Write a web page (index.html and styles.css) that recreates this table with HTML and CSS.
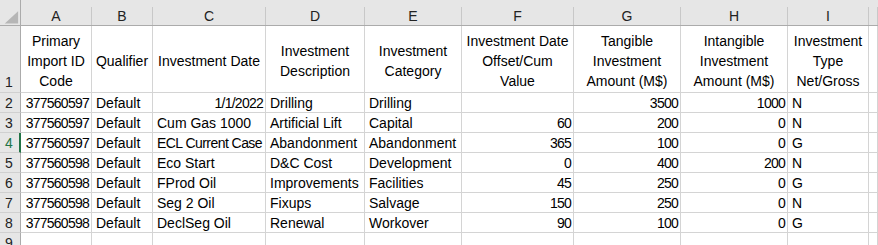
FILE: index.html
```html
<!DOCTYPE html>
<html>
<head>
<meta charset="utf-8">
<link rel="stylesheet" href="styles.css">
</head>
<body>
<div class="sheet">
  <div class="ch corner"><div class="lbl"><svg width="21" height="18" viewBox="0 0 21 18"><polygon points="19,4 19,17 5,17" fill="#b6b6b6"/></svg></div></div>
  <div class="ch"><div class="lbl">A</div></div>
  <div class="ch"><div class="lbl">B</div></div>
  <div class="ch"><div class="lbl">C</div></div>
  <div class="ch"><div class="lbl">D</div></div>
  <div class="ch"><div class="lbl">E</div></div>
  <div class="ch"><div class="lbl">F</div></div>
  <div class="ch"><div class="lbl">G</div></div>
  <div class="ch"><div class="lbl">H</div></div>
  <div class="ch"><div class="lbl">I</div></div>
  <div class="ch"><div class="lbl"></div></div>

  <div class="rh rh-bottom">1</div>
  <div class="c hd">Primary<br>Import ID<br>Code</div>
  <div class="c hd">Qualifier</div>
  <div class="c hd">Investment Date</div>
  <div class="c hd">Investment<br>Description</div>
  <div class="c hd">Investment<br>Category</div>
  <div class="c hd">Investment Date<br>Offset/Cum<br>Value</div>
  <div class="c hd">Tangible<br>Investment<br>Amount (M$)</div>
  <div class="c hd">Intangible<br>Investment<br>Amount (M$)</div>
  <div class="c hd">Investment<br>Type<br>Net/Gross</div>
  <div class="c hd"></div>

  <div class="rh">2</div>
  <div class="c num">377560597</div><div class="c">Default</div><div class="c num">1/1/2022</div><div class="c">Drilling</div><div class="c">Drilling</div><div class="c num"></div><div class="c num">3500</div><div class="c num">1000</div><div class="c">N</div><div class="c"></div>

  <div class="rh">3</div>
  <div class="c num">377560597</div><div class="c">Default</div><div class="c">Cum Gas 1000</div><div class="c">Artificial Lift</div><div class="c">Capital</div><div class="c num">60</div><div class="c num">200</div><div class="c num">0</div><div class="c">N</div><div class="c"></div>

  <div class="rh active">4</div>
  <div class="c num">377560597</div><div class="c">Default</div><div class="c tight">ECL Current Case</div><div class="c">Abandonment</div><div class="c">Abandonment</div><div class="c num">365</div><div class="c num">100</div><div class="c num">0</div><div class="c">G</div><div class="c"></div>

  <div class="rh">5</div>
  <div class="c num">377560598</div><div class="c">Default</div><div class="c">Eco Start</div><div class="c">D&amp;C Cost</div><div class="c">Development</div><div class="c num">0</div><div class="c num">400</div><div class="c num">200</div><div class="c">N</div><div class="c"></div>

  <div class="rh">6</div>
  <div class="c num">377560598</div><div class="c">Default</div><div class="c">FProd Oil</div><div class="c">Improvements</div><div class="c">Facilities</div><div class="c num">45</div><div class="c num">250</div><div class="c num">0</div><div class="c">G</div><div class="c"></div>

  <div class="rh">7</div>
  <div class="c num">377560598</div><div class="c">Default</div><div class="c">Seg 2 Oil</div><div class="c">Fixups</div><div class="c">Salvage</div><div class="c num">150</div><div class="c num">250</div><div class="c num">0</div><div class="c">N</div><div class="c"></div>

  <div class="rh">8</div>
  <div class="c num">377560598</div><div class="c">Default</div><div class="c">DeclSeg Oil</div><div class="c">Renewal</div><div class="c">Workover</div><div class="c num">90</div><div class="c num">100</div><div class="c num">0</div><div class="c">G</div><div class="c"></div>

  <div class="rh">9</div>
  <div class="c"></div><div class="c"></div><div class="c"></div><div class="c"></div><div class="c"></div><div class="c"></div><div class="c"></div><div class="c"></div><div class="c"></div><div class="c"></div>
</div>
</body>
</html>
```

FILE: styles.css
```css
html, body {
  margin: 0;
  padding: 0;
  background: #ffffff;
  overflow: hidden;
}

.sheet {
  display: grid;
  grid-template-columns: 21px 71px 61px 113px 99px 97px 112px 107px 107px 81px 1fr;
  grid-template-rows: 26px 67px repeat(8, 20px);
  width: 878px;
  font-family: "Liberation Sans", Arial, sans-serif;
  font-size: 14px;
  color: #000;
}

.ch {
  background: #e6e6e6;
  padding-top: 7px;
  box-sizing: border-box;
  border-bottom: 1px solid #ababab;
}

.ch .lbl {
  height: 18px;
  line-height: 18px;
  text-align: center;
  border-right: 1px solid #c8c8c8;
  color: #222;
  font-size: 14px;
}

.corner .lbl {
  border-right: 1px solid #ababab;
  margin-top: -7px;
  height: 25px;
  display: flex;
  align-items: flex-end;
}

.corner svg {
  display: block;
}

.rh {
  background: #e6e6e6;
  box-sizing: border-box;
  border-right: 1px solid #ababab;
  border-bottom: 1px solid #d0d0d0;
  color: #222;
  text-align: center;
  line-height: 19px;
  padding-top: 1px;
  padding-right: 2px;
}

.rh-bottom {
  display: flex;
  align-items: flex-end;
  justify-content: center;
  padding-top: 0;
}

.rh.active {
  border-right: 2px solid #217346;
  color: #217346;
  padding-right: 1px;
}

.c {
  box-sizing: border-box;
  border-right: 1px solid #d4d4d4;
  border-bottom: 1px solid #d4d4d4;
  padding: 1px 2px 0 4px;
  line-height: 19px;
  white-space: nowrap;
  overflow: hidden;
}

.c.num {
  text-align: right;
  letter-spacing: -0.75px;
}

.c.tight {
  letter-spacing: -0.55px;
}

.c.hd {
  display: flex;
  align-items: center;
  justify-content: center;
  text-align: center;
  line-height: 20px;
  padding: 3px 2px 0;
}
```
